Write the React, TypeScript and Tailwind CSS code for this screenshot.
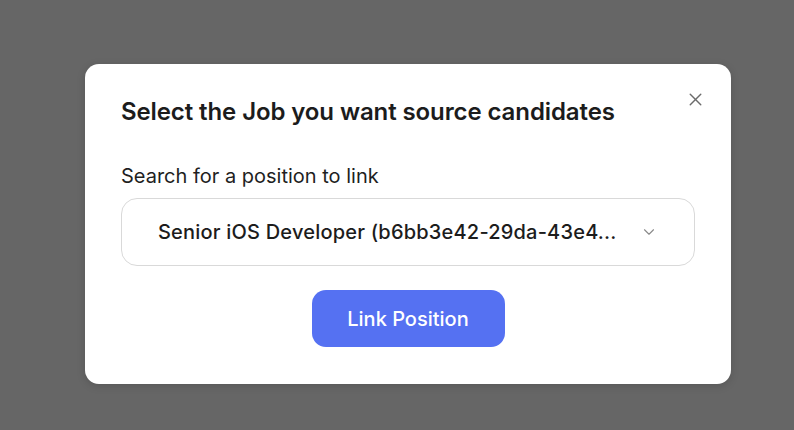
import { X, ChevronDown } from "lucide-react";

export default function App() {
  return (
    <main
      className="h-[430px] w-[794px] overflow-hidden bg-[#666666] pl-[85px] pt-[64px]"
      style={{ fontFamily: "Inter, 'Noto Sans', sans-serif" }}
    >
      <div className="relative w-[646px] rounded-[14px] bg-white px-[36px] pb-[37px] pt-[32px] shadow-[0_2px_8px_rgba(0,0,0,0.15)]">
        <button
          type="button"
          className="absolute right-[25px] top-[25px] text-[#6b6b6b]"
          aria-label="Close"
        >
          <X size={21} strokeWidth={1.6} />
        </button>
        <h2 className="text-[24px] font-semibold leading-[32px] tracking-[-0.1px] text-[#1c1c1c]">
          Select the Job you want source candidates
        </h2>
        <label className="mt-[35px] block text-[20px] leading-[26px] text-[#1f1f1f]">
          Search for a position to link
        </label>
        <div className="mt-[9px] flex h-[68px] items-center justify-between rounded-[16px] border border-[#d9d9d9] pl-[36px] pr-[36px]">
          <span className="truncate text-[20px] font-medium tracking-[0.2px] text-[#1c1c1c]">
            Senior iOS Developer (b6bb3e42-29da-43e4...
          </span>
          <ChevronDown size={18} strokeWidth={1.5} className="text-[#8a8a8a]" />
        </div>
        <div className="mt-[24px] flex justify-center">
          <button
            type="button"
            className="h-[57px] w-[193px] rounded-[14px] bg-[#5571f2] text-[20px] font-medium text-white"
          >
            Link Position
          </button>
        </div>
      </div>
    </main>
  );
}
